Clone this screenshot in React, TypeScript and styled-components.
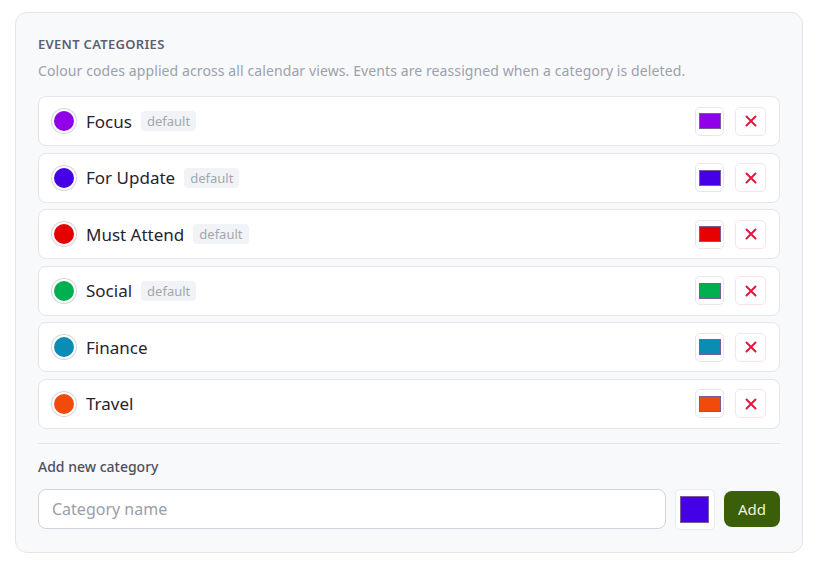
import React from 'react';
import styled, { createGlobalStyle } from 'styled-components';

const GlobalStyle = createGlobalStyle`
  body {
    margin: 0;
    background: #ffffff;
    font-family: 'Noto Sans', 'DejaVu Sans', sans-serif;
  }
`

const Page = styled.div`
  padding: 12px 17px 12px 15px;
`

const Card = styled.section`
  background: #f8f9fb;
  border: 1px solid #e3e5ea;
  border-radius: 12px;
  padding: 22px 22px 22px 22px;
`

const Title = styled.h2`
  margin: 0;
  font-size: 13px;
  font-weight: 600;
  letter-spacing: 0.3px;
  color: #5b6170;
  text-transform: uppercase;
  line-height: 18px;
`

const Subtitle = styled.p`
  margin: 8px 0 15px 0;
  font-size: 14px;
  letter-spacing: 0.1px;
  color: #9ca1ab;
  line-height: 20px;
`

const List = styled.div`
  display: flex;
  flex-direction: column;
  gap: 6.6px;
`

const Row = styled.div`
  display: flex;
  align-items: center;
  height: 48px;
  padding: 0 13px;
  background: #ffffff;
  border: 1px solid #e4e6eb;
  border-radius: 8px;
`

const Dot = styled.span<{ $color: string }>`
  width: 20px;
  height: 20px;
  border-radius: 50%;
  background: ${p => p.$color};
  border: 2px solid #ffffff;
  box-shadow: 0 0 0 1px #d4d6dc;
  flex-shrink: 0;
`

const Name = styled.span`
  margin-left: 10px;
  font-size: 17px;
  color: #1f2430;
`

const Badge = styled.span`
  margin-left: 9px;
  padding: 1px 6px;
  font-size: 13px;
  color: #a3a7b0;
  background: #f2f3f6;
  border-radius: 4px;
  line-height: 18px;
`

const Spacer = styled.div`
  flex: 1;
`

const SwatchButton = styled.button`
  width: 29px;
  height: 29px;
  padding: 0;
  display: flex;
  align-items: center;
  justify-content: center;
  background: #ffffff;
  border: 1px solid #e6e7ec;
  border-radius: 5px;
`

const Swatch = styled.span<{ $color: string }>`
  width: 20px;
  height: 14px;
  background: ${p => p.$color};
  border: 1px solid #7a5a9a;
`

const DeleteButton = styled.button`
  margin-left: 11px;
  width: 31px;
  height: 29px;
  padding: 0;
  display: flex;
  align-items: center;
  justify-content: center;
  background: #ffffff;
  border: 1px solid #fbe3e8;
  border-radius: 5px;
  color: #e3173f;
`

const Divider = styled.hr`
  margin: 14px 0 0 0;
  border: none;
  border-top: 1px solid #e2e4e9;
`

const AddLabel = styled.div`
  margin-top: 13px;
  font-size: 14px;
  font-weight: 500;
  color: #4b5160;
  line-height: 20px;
`

const AddRow = styled.div`
  display: flex;
  align-items: center;
  margin-top: 12px;
  gap: 9px;
`

const Input = styled.input`
  flex: 1;
  height: 40px;
  box-sizing: border-box;
  padding: 0 13px;
  font-family: inherit;
  font-size: 16px;
  color: #1f2430;
  background: #ffffff;
  border: 1px solid #d0d3da;
  border-radius: 8px;
  outline: none;

  &::placeholder {
    color: #9a9ea8;
  }
`

const PickerButton = styled.button`
  width: 40px;
  height: 41px;
  padding: 0;
  display: flex;
  align-items: center;
  justify-content: center;
  background: #ffffff;
  border: 1px solid #eaebef;
  border-radius: 5px;
`

const PickerSwatch = styled.span`
  width: 27px;
  height: 25px;
  background: #4400e6;
  border: 1px solid #7a5a9a;
`

const AddButton = styled.button`
  height: 36px;
  padding: 0 14px;
  font-family: inherit;
  font-size: 15px;
  color: #eef3df;
  background: #3b5e08;
  border: none;
  border-radius: 8px;
`

const Cross = () => (
  <svg width="12" height="12" viewBox="0 0 12 12">
    <path d="M1.5 1.5 L10.5 10.5 M10.5 1.5 L1.5 10.5" stroke="currentColor" strokeWidth="2" strokeLinecap="round" />
  </svg>
)

const categories = [
  { name: 'Focus', color: '#9000e8', isDefault: true },
  { name: 'For Update', color: '#4600e6', isDefault: true },
  { name: 'Must Attend', color: '#e60000', isDefault: true },
  { name: 'Social', color: '#00b050', isDefault: true },
  { name: 'Finance', color: '#0a8cb4', isDefault: false },
  { name: 'Travel', color: '#f24a0a', isDefault: false },
]

export default function App() {
  return (
    <Page>
      <GlobalStyle />
      <Card>
        <Title>Event Categories</Title>
        <Subtitle>Colour codes applied across all calendar views. Events are reassigned when a category is deleted.</Subtitle>
        <List>
          {categories.map(c => (
            <Row key={c.name}>
              <Dot $color={c.color} />
              <Name>{c.name}</Name>
              {c.isDefault && <Badge>default</Badge>}
              <Spacer />
              <SwatchButton>
                <Swatch $color={c.color} />
              </SwatchButton>
              <DeleteButton>
                <Cross />
              </DeleteButton>
            </Row>
          ))}
        </List>
        <Divider />
        <AddLabel>Add new category</AddLabel>
        <AddRow>
          <Input placeholder="Category name" />
          <PickerButton>
            <PickerSwatch />
          </PickerButton>
          <AddButton>Add</AddButton>
        </AddRow>
      </Card>
    </Page>
  );
}
